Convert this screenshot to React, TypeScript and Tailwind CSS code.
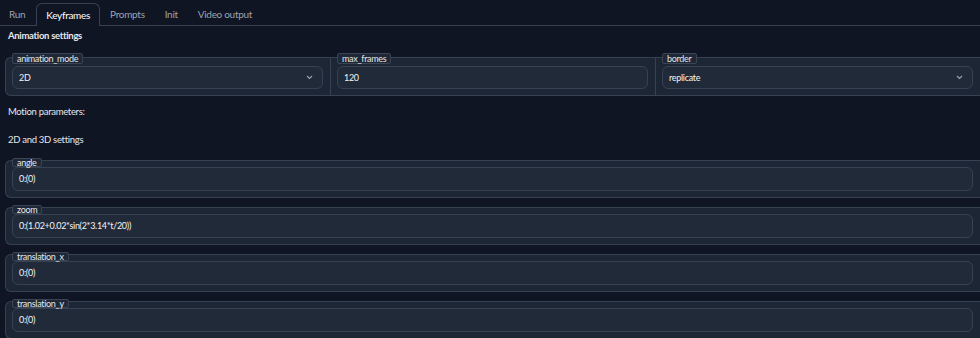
import React from 'react';

const font = { fontFamily: 'Lato, "Noto Sans", sans-serif' };

const tabs = ['Run', 'Keyframes', 'Prompts', 'Init', 'Video output'];

const Label: React.FC<{ text: string; tall?: boolean }> = ({ text, tall }) => (
  <span
    className={`relative self-start px-[4px] text-[9px] tracking-[-0.3px] text-[#e5e7eb] bg-[#1f2836] border border-[#3a4454] rounded-[2px] ${
      tall ? '-mt-[5px] h-[11px] leading-[10px]' : '-mt-[3px] h-[9px] leading-[8px]'
    }`}
  >
    {text}
  </span>
);

const Chevron = () => (
  <svg width="7" height="5" viewBox="0 0 7 5" className="ml-auto mr-[3px] text-[#9ca3af]">
    <path d="M1 1l2.5 2.5L6 1" fill="none" stroke="currentColor" strokeWidth="1.1" />
  </svg>
);

const Field: React.FC<{ value: string; select?: boolean; h: string }> = ({ value, select, h }) => (
  <div
    className={`flex items-center ${h} px-[6px] bg-[#212a39] border border-[#364152] rounded-[6px] text-[9px] tracking-[-0.3px] text-[#f3f4f6]`}
  >
    <span>{value}</span>
    {select && <Chevron />}
  </div>
);

const Cell: React.FC<{ label: string; value: string; select?: boolean; border?: boolean }> = ({
  label,
  value,
  select,
  border,
}) => (
  <div className={`flex-1 flex flex-col gap-[2px] pl-[6px] pr-[7px] pb-[6px] ${border ? 'border-l border-[#364152]' : ''}`}>
    <Label text={label} tall />
    <Field value={value} select={select} h="h-[23px]" />
  </div>
);

const Block: React.FC<{ label: string; value: string }> = ({ label, value }) => (
  <div className="ml-[5px] flex flex-col pl-[6px] pr-[7px] pb-[6px] bg-[#1d2634] border border-r-0 border-[#364152] rounded-l-[6px]">
    <Label text={label} />
    <Field value={value} h="h-[24px]" />
  </div>
);

export default function App() {
  return (
    <div className="w-[980px] h-[338px] overflow-hidden bg-[#0f1523] text-[#e5e7eb]" style={font}>
      <div className="flex items-end h-[26px] border-b border-[#364152]">
        {tabs.map((t) => (
          <div
            key={t}
            className={`flex items-center text-[10px] tracking-[-0.3px] ${
              t === 'Keyframes'
                ? 'mb-[-1px] h-[23px] px-[9px] bg-[#0f1523] border border-b-0 border-[#364152] rounded-t-[6px] text-white'
                : 'h-[22px] px-[10px] text-[#9ca3af]'
            } ${t === 'Run' ? 'pl-[9px] pr-[11px]' : ''}`}
          >
            {t}
          </div>
        ))}
      </div>

      <div className="px-[8px] h-[20px] text-[9.5px] tracking-[-0.3px] font-bold leading-[20px]">Animation settings</div>

      <div className="pt-[11px]">
        <div className="ml-[5px] flex bg-[#1d2634] border border-r-0 border-[#364152] rounded-l-[6px]">
          <Cell label="animation_mode" value="2D" select />
          <Cell label="max_frames" value="120" border />
          <Cell label="border" value="replicate" select border />
        </div>
      </div>

      <div className="pt-[2px] px-[8px] text-[9.5px] tracking-[-0.3px] leading-[28px] h-[30px]">Motion parameters:</div>
      <div className="px-[8px] text-[9.5px] tracking-[-0.3px] leading-[28px] h-[28px]">2D and 3D settings</div>

      <div className="pt-[6px] flex flex-col gap-[9px]">
        <Block label="angle" value="0:(0)" />
        <Block label="zoom" value="0:(1.02+0.02*sin(2*3.14*t/20))" />
        <Block label="translation_x" value="0:(0)" />
        <Block label="translation_y" value="0:(0)" />
      </div>
    </div>
  );
}
